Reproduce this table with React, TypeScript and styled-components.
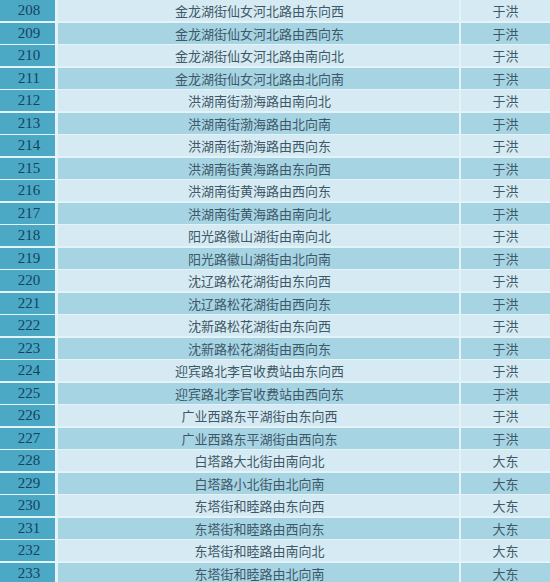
import React from "react";
import styled, { createGlobalStyle } from "styled-components";

const Global = createGlobalStyle`
  html, body { margin: 0; padding: 0; background: #e4f3f8; overflow: hidden; }
`;

const rows: [number, string, string][] = [
  [208, "金龙湖街仙女河北路由东向西", "于洪"],
  [209, "金龙湖街仙女河北路由西向东", "于洪"],
  [210, "金龙湖街仙女河北路由南向北", "于洪"],
  [211, "金龙湖街仙女河北路由北向南", "于洪"],
  [212, "洪湖南街渤海路由南向北", "于洪"],
  [213, "洪湖南街渤海路由北向南", "于洪"],
  [214, "洪湖南街渤海路由西向东", "于洪"],
  [215, "洪湖南街黄海路由东向西", "于洪"],
  [216, "洪湖南街黄海路由西向东", "于洪"],
  [217, "洪湖南街黄海路由南向北", "于洪"],
  [218, "阳光路徽山湖街由南向北", "于洪"],
  [219, "阳光路徽山湖街由北向南", "于洪"],
  [220, "沈辽路松花湖街由东向西", "于洪"],
  [221, "沈辽路松花湖街由西向东", "于洪"],
  [222, "沈新路松花湖街由东向西", "于洪"],
  [223, "沈新路松花湖街由西向东", "于洪"],
  [224, "迎宾路北李官收费站由东向西", "于洪"],
  [225, "迎宾路北李官收费站由西向东", "于洪"],
  [226, "广业西路东平湖街由东向西", "于洪"],
  [227, "广业西路东平湖街由西向东", "于洪"],
  [228, "白塔路大北街由南向北", "大东"],
  [229, "白塔路小北街由北向南", "大东"],
  [230, "东塔街和睦路由东向西", "大东"],
  [231, "东塔街和睦路由西向东", "大东"],
  [232, "东塔街和睦路由南向北", "大东"],
  [233, "东塔街和睦路由北向南", "大东"],
];

const Table = styled.div`
  width: 550px;
  display: grid;
  grid-auto-rows: 21px;
  row-gap: 1.5px;
  background: #e4f3f8;
`;

const Row = styled.div`
  display: grid;
  grid-template-columns: 55px 401px 89px;
  column-gap: 2.5px;
`;

const NumCell = styled.div`
  background: #4ba9c6;
  color: #17425e;
  font-family: "Liberation Serif", "DejaVu Serif", serif;
  font-size: 15px;
  display: flex;
  align-items: center;
  justify-content: center;
  padding-left: 3px;
`;

const TextCell = styled.div<{ $dark: boolean }>`
  background: ${(p) => (p.$dark ? "#a6d4e3" : "#d5eaf2")};
  color: #3f5868;
  font-family: "Noto Sans CJK SC", sans-serif;
  font-size: 13px;
  display: flex;
  align-items: center;
  justify-content: center;
  line-height: 1;
`;

const MainCell = styled(TextCell)`
  padding-left: 3px;
`;

export default function App() {
  return (
    <>
      <Global />
      <Table>
        {rows.map(([n, road, area], i) => (
          <Row key={n}>
            <NumCell>{n}</NumCell>
            <MainCell $dark={i % 2 === 1}>{road}</MainCell>
            <TextCell $dark={i % 2 === 1}>{area}</TextCell>
          </Row>
        ))}
      </Table>
    </>
  );
}
